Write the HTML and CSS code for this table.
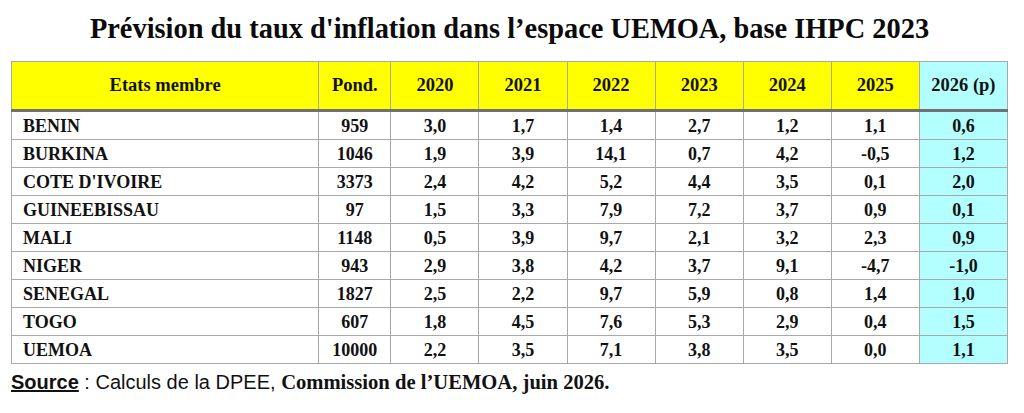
FILE: index.html
```html
<!DOCTYPE html>
<html lang="fr">
<head>
<meta charset="utf-8">
<title>Prévision du taux d'inflation UEMOA</title>
<link rel="stylesheet" href="styles.css">
</head>
<body>
<div class="page">
  <h1 class="title">Prévision du taux d'inflation dans l’espace UEMOA, base IHPC 2023</h1>
  <table class="grid">
    <colgroup>
      <col class="c-name"><col class="c-pond">
      <col class="c-yr"><col class="c-yr"><col class="c-yr"><col class="c-yr"><col class="c-yr"><col class="c-yr"><col class="c-yr">
    </colgroup>
    <thead>
      <tr>
        <th>Etats membre</th><th>Pond.</th><th>2020</th><th>2021</th><th>2022</th><th>2023</th><th>2024</th><th>2025</th><th class="proj">2026 (p)</th>
      </tr>
    </thead>
    <tbody>
      <tr><td class="name">BENIN</td><td>959</td><td>3,0</td><td>1,7</td><td>1,4</td><td>2,7</td><td>1,2</td><td>1,1</td><td class="proj">0,6</td></tr>
      <tr><td class="name">BURKINA</td><td>1046</td><td>1,9</td><td>3,9</td><td>14,1</td><td>0,7</td><td>4,2</td><td>-0,5</td><td class="proj">1,2</td></tr>
      <tr><td class="name">COTE D'IVOIRE</td><td>3373</td><td>2,4</td><td>4,2</td><td>5,2</td><td>4,4</td><td>3,5</td><td>0,1</td><td class="proj">2,0</td></tr>
      <tr><td class="name">GUINEEBISSAU</td><td>97</td><td>1,5</td><td>3,3</td><td>7,9</td><td>7,2</td><td>3,7</td><td>0,9</td><td class="proj">0,1</td></tr>
      <tr><td class="name">MALI</td><td>1148</td><td>0,5</td><td>3,9</td><td>9,7</td><td>2,1</td><td>3,2</td><td>2,3</td><td class="proj">0,9</td></tr>
      <tr><td class="name">NIGER</td><td>943</td><td>2,9</td><td>3,8</td><td>4,2</td><td>3,7</td><td>9,1</td><td>-4,7</td><td class="proj">-1,0</td></tr>
      <tr><td class="name">SENEGAL</td><td>1827</td><td>2,5</td><td>2,2</td><td>9,7</td><td>5,9</td><td>0,8</td><td>1,4</td><td class="proj">1,0</td></tr>
      <tr><td class="name">TOGO</td><td>607</td><td>1,8</td><td>4,5</td><td>7,6</td><td>5,3</td><td>2,9</td><td>0,4</td><td class="proj">1,5</td></tr>
      <tr><td class="name">UEMOA</td><td>10000</td><td>2,2</td><td>3,5</td><td>7,1</td><td>3,8</td><td>3,5</td><td>0,0</td><td class="proj">1,1</td></tr>
    </tbody>
  </table>
  <p class="source"><span class="src-label">Source</span> : Calculs de la DPEE, <span class="src-org">Commission de l’UEMOA, juin 2026.</span></p>
</div>
</body>
</html>
```

FILE: styles.css
```css
html, body {
  margin: 0;
  padding: 0;
  background: #ffffff;
}

.page {
  padding: 11px 0 0 11px;
  width: 997px;
  font-family: "Liberation Serif", "Times New Roman", serif;
  color: #111111;
}

.title {
  margin: 0 0 14px 0;
  height: 36px;
  line-height: 36px;
  font-size: 28.4px;
  font-weight: bold;
  text-align: center;
  color: #0a0a0a;
}

.grid {
  border-collapse: collapse;
  table-layout: fixed;
  width: 997px;
  font-size: 18px;
  font-weight: bold;
}

.c-name { width: 307px; }
.c-pond { width: 72px; }
.c-yr { width: 88px; }

.grid th,
.grid td {
  border: 1px solid #a8a8a8;
  padding: 0;
  text-align: center;
  vertical-align: middle;
}

.grid thead th {
  background: #ffff00;
  height: 47px;
  border-bottom: 3px solid #707070;
  font-weight: bold;
  font-size: 18.5px;
}

.grid tbody td {
  height: 27px;
  line-height: 20px;
}

.grid td.name {
  text-align: left;
  padding-left: 11px;
}

.grid .proj,
.grid thead th.proj {
  background: #b3ffff;
}

.source {
  margin: 6px 0 0 0;
  font-size: 20px;
  line-height: 24px;
  font-family: "Liberation Sans", Arial, sans-serif;
  color: #111111;
}

.src-label {
  font-weight: bold;
  text-decoration: underline;
}

.src-org {
  font-family: "Liberation Serif", "Times New Roman", serif;
  font-weight: bold;
  font-size: 20.6px;
}
```
